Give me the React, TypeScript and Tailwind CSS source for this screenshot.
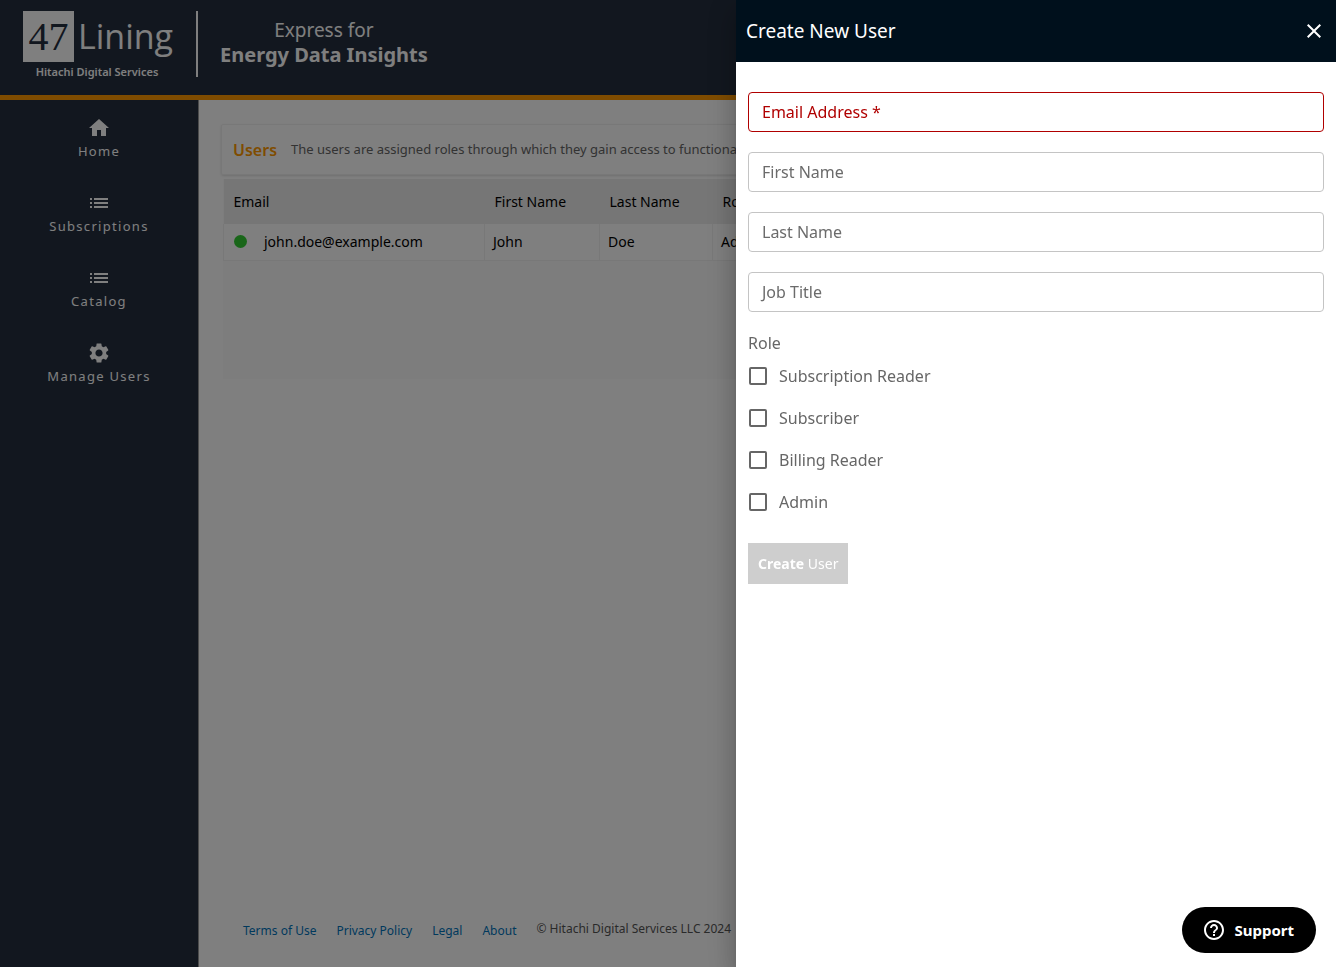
import type { ReactNode } from "react";
import { MdClose, MdHelpOutline, MdHome, MdList, MdSettings } from "react-icons/md";

const navItems: { label: string; icon: ReactNode }[] = [
  { label: "Home", icon: <MdHome size={24} /> },
  { label: "Subscriptions", icon: <MdList size={24} /> },
  { label: "Catalog", icon: <MdList size={24} /> },
  { label: "Manage Users", icon: <MdSettings size={24} /> },
];

const footerLinks = ["Terms of Use", "Privacy Policy", "Legal", "About"];

const fields = [
  { id: "email", label: "Email Address *", type: "email", required: true },
  { id: "first-name", label: "First Name", type: "text", required: false },
  { id: "last-name", label: "Last Name", type: "text", required: false },
  { id: "job-title", label: "Job Title", type: "text", required: false },
];

const roles = ["Subscription Reader", "Subscriber", "Billing Reader", "Admin"];

function Header() {
  return (
    <header className="flex h-[100px] items-start border-b-5 border-[#ff9900] bg-[#242e3e] pt-[11px] pl-[23px] text-white">
      <div className="flex w-[148px] flex-col">
        <div className="flex items-center gap-1">
          <span className="flex size-[51px] shrink-0 items-center justify-center bg-white font-['Liberation_Serif'] text-[40px] leading-none text-[#242e3e]">
            47
          </span>
          <span className="font-['Open_Sans'] text-[34px] leading-[51px]">Lining</span>
        </div>
        <span className="text-center text-[11px] leading-5 font-semibold whitespace-nowrap">
          Hitachi Digital Services
        </span>
      </div>
      <div className="ml-[25px] h-[66px] w-0.5 bg-white" />
      <div className="ml-[22px] flex flex-col items-center pt-1.5">
        <span className="text-[19px] leading-[26px]">Express for</span>
        <span className="text-[20px] leading-6 font-bold">Energy Data Insights</span>
      </div>
    </header>
  );
}

function Sidebar() {
  return (
    <nav className="flex w-[199px] shrink-0 flex-col border-r border-[#999] bg-[#242e3e] pt-2">
      {navItems.map((item) => (
        <a key={item.label} href="#" className="flex h-[75px] flex-col items-center pt-2 text-white">
          {item.icon}
          <span className="text-[13px] leading-[22px] tracking-widest">{item.label}</span>
        </a>
      ))}
    </nav>
  );
}

function UsersTable() {
  return (
    <div className="ml-0.5 min-h-[200px] bg-[#fbfbfb]">
      <table className="w-full table-fixed text-left text-[14px] text-black">
        <colgroup>
          <col className="w-[261px]" />
          <col className="w-[115px]" />
          <col className="w-[113px]" />
          <col />
        </colgroup>
        <thead>
          <tr className="h-[45px] bg-[#ececec]">
            {["Email", "First Name", "Last Name", "Roles"].map((heading) => (
              <th key={heading} className="px-2.5 font-normal">
                {heading}
              </th>
            ))}
          </tr>
        </thead>
        <tbody>
          <tr className="h-9 border-b border-l border-[#f0f0f0] bg-[#fefefe]">
            <td className="px-2.5">
              <div className="flex items-center gap-[17px]">
                <span className="size-[13px] rounded-full bg-[#32cd32]" />
                john.doe@example.com
              </div>
            </td>
            {["John", "Doe", "Admin"].map((cell) => (
              <td key={cell} className="border-l border-[#f0f0f0] px-2">
                {cell}
              </td>
            ))}
          </tr>
        </tbody>
      </table>
    </div>
  );
}

function Drawer() {
  return (
    <aside
      role="dialog"
      aria-labelledby="drawer-title"
      className="fixed inset-y-0 right-0 w-[600px] max-w-full bg-white shadow-[0_8px_10px_-5px_rgba(0,0,0,0.2),0_16px_24px_2px_rgba(0,0,0,0.14),0_6px_30px_5px_rgba(0,0,0,0.12)]"
    >
      <div className="flex h-[62px] items-center justify-between bg-[#00101c] px-2.5 text-white">
        <h2 id="drawer-title" className="text-[19px]">
          Create New User
        </h2>
        <button type="button" aria-label="Close">
          <MdClose size={24} />
        </button>
      </div>
      <form className="flex flex-col gap-5 px-3 pt-[30px] text-[16px] text-[#666]">
        {fields.map((field) => (
          <div key={field.id} className="relative">
            <input
              id={field.id}
              type={field.type}
              required={field.required}
              placeholder=" "
              className={
                field.required
                  ? "peer block h-10 w-full rounded border border-[#b00000] px-3.5 outline-none"
                  : "peer block h-10 w-full rounded border border-[#c4c4c4] px-3.5 outline-none"
              }
            />
            <label
              htmlFor={field.id}
              className={
                field.required
                  ? "pointer-events-none absolute inset-y-0 left-3.5 flex items-center text-[#b00000] peer-focus:hidden peer-[:not(:placeholder-shown)]:hidden"
                  : "pointer-events-none absolute inset-y-0 left-3.5 flex items-center text-[#6b6b6b] peer-focus:hidden peer-[:not(:placeholder-shown)]:hidden"
              }
            >
              {field.label}
            </label>
          </div>
        ))}
        <fieldset>
          <legend className="leading-[23px]">Role</legend>
          {roles.map((role) => (
            <label key={role} className="flex h-[42px] items-center gap-3 pl-px">
              <input
                type="checkbox"
                className="size-[18px] appearance-none rounded-xs border-2 border-[#666] checked:bg-[#666]"
              />
              {role}
            </label>
          ))}
        </fieldset>
        <button type="submit" disabled className="h-[41px] self-start bg-[#cecece] px-2.5 text-[14px] text-white">
          <span className="font-bold">Create</span> User
        </button>
      </form>
    </aside>
  );
}

export default function App() {
  return (
    <div className="flex min-h-screen flex-col bg-white font-['Noto_Sans',sans-serif]">
      <Header />
      <div className="flex flex-1">
        <Sidebar />
        <main className="flex min-w-0 flex-1 flex-col overflow-hidden px-[22px] pt-6">
          <section className="mb-1 flex h-[51px] items-center gap-3.5 rounded-xs border border-[#f0f0f0] px-[11px] whitespace-nowrap shadow-sm">
            <h1 className="text-[16px] font-semibold text-[#ff9900]">Users</h1>
            <p className="text-[13px] text-[#666]">
              The users are assigned roles through which they gain access to functionality.
            </p>
          </section>
          <UsersTable />
          <footer className="mt-auto flex items-start gap-5 pb-[22px] pl-[22px] text-[12px] whitespace-nowrap">
            {footerLinks.map((link) => (
              <a key={link} href="#" className="leading-7 text-[#0073bb]">
                {link}
              </a>
            ))}
            <span className="leading-6 text-[#555]">© Hitachi Digital Services LLC 2024</span>
          </footer>
        </main>
      </div>
      <div className="fixed inset-0 bg-black/50" />
      <Drawer />
      <button
        type="button"
        className="fixed right-5 bottom-3.5 flex h-[46px] items-center gap-2 rounded-full bg-black pr-[22px] pl-5 text-[15px] font-bold text-white"
      >
        <MdHelpOutline size={24} />
        Support
      </button>
    </div>
  );
}
